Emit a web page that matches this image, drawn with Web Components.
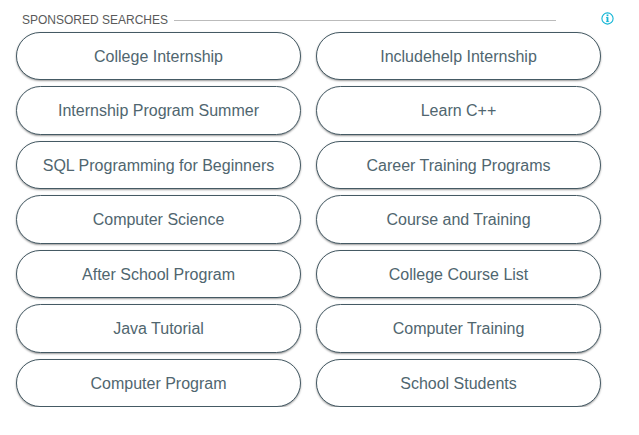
<!DOCTYPE html>
<html lang="en">
<head>
<meta charset="utf-8">
<title>Sponsored searches</title>
<style>
  body {
    margin: 0;
    background: #fff;
    font-family: "Liberation Sans", Arial, sans-serif;
  }
</style>
</head>
<body>
<search-unit heading="SPONSORED SEARCHES">
  <search-pill>College Internship</search-pill>
  <search-pill>Includehelp Internship</search-pill>
  <search-pill>Internship Program Summer</search-pill>
  <search-pill>Learn C++</search-pill>
  <search-pill>SQL Programming for Beginners</search-pill>
  <search-pill>Career Training Programs</search-pill>
  <search-pill>Computer Science</search-pill>
  <search-pill>Course and Training</search-pill>
  <search-pill>After School Program</search-pill>
  <search-pill>College Course List</search-pill>
  <search-pill>Java Tutorial</search-pill>
  <search-pill>Computer Training</search-pill>
  <search-pill>Computer Program</search-pill>
  <search-pill>School Students</search-pill>
</search-unit>

<script>
const infoTemplate = document.createElement("template");
infoTemplate.innerHTML = `
  <style>
    :host {
      display: block;
      width: 13px;
      height: 13px;
      color: #12b5d5;
    }

    svg {
      display: block;
    }
  </style>
  <svg width="13" height="13" viewBox="0 0 13 13" fill="none" stroke="currentColor">
    <circle cx="6.5" cy="6.5" r="5.6" stroke-width="1.1"/>
    <path d="M6.5 2.5v1.7" stroke-width="1.8"/>
    <path d="M5 5.5h1.6M5 9.6h3.2" stroke-width=".7"/>
    <path d="M6.5 5.1v4.8" stroke-width="1.8"/>
  </svg>
`;

class InfoIcon extends HTMLElement {
  constructor() {
    super();
    this.attachShadow({ mode: "open" });
    this.shadowRoot.appendChild(infoTemplate.content.cloneNode(true));
  }
}

const pillTemplate = document.createElement("template");
pillTemplate.innerHTML = `
  <style>
    :host {
      display: flex;
      align-items: center;
      justify-content: center;
      box-sizing: border-box;
      height: 48.5px;
      padding-top: 1.1px;
      border: 1px solid #455a64;
      border-radius: 25px;
      background: #fff;
      box-shadow: 0 1px 2px rgba(0, 0, 0, 0.4);
      color: #50666f;
      font-size: 16px;
      line-height: 20px;
      white-space: nowrap;
      cursor: pointer;
    }
  </style>
  <slot></slot>
`;

class SearchPill extends HTMLElement {
  constructor() {
    super();
    this.attachShadow({ mode: "open" });
    this.shadowRoot.appendChild(pillTemplate.content.cloneNode(true));
  }
}

const unitTemplate = document.createElement("template");
unitTemplate.innerHTML = `
  <style>
    :host {
      display: block;
      box-sizing: border-box;
      width: 639px;
      padding: 11.9px 38px 0 16px;
    }

    header {
      display: flex;
      align-items: center;
      height: 16px;
      margin: 0 -13px 4px 6px;
    }

    .heading {
      color: #5a5a5a;
      font-size: 12px;
      line-height: 16px;
      white-space: nowrap;
    }

    .rule {
      flex: 1;
      height: 1px;
      margin: 1px 45px 0 6px;
      background: #bbb;
    }

    info-icon {
      margin-top: -3px;
    }

    .grid {
      display: grid;
      grid-template-columns: 1fr 1fr;
      gap: 6px 15px;
    }
  </style>
  <header>
    <span class="heading"></span>
    <span class="rule"></span>
    <info-icon></info-icon>
  </header>
  <div class="grid"><slot></slot></div>
`;

class SearchUnit extends HTMLElement {
  constructor() {
    super();
    this.attachShadow({ mode: "open" });
    this.shadowRoot.appendChild(unitTemplate.content.cloneNode(true));
  }

  static get observedAttributes() {
    return ["heading"];
  }

  attributeChangedCallback(name, oldValue, newValue) {
    this.shadowRoot.querySelector(".heading").textContent = newValue;
  }
}

window.customElements.define("info-icon", InfoIcon);
window.customElements.define("search-pill", SearchPill);
window.customElements.define("search-unit", SearchUnit);
</script>
</body>
</html>
